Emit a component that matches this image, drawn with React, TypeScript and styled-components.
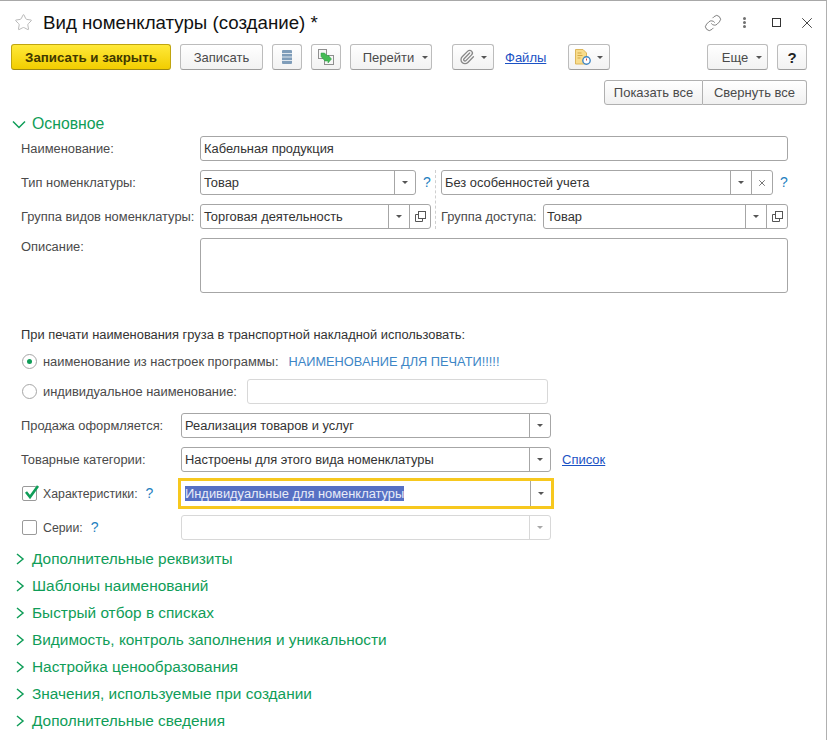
import { FC, ReactNode } from 'react';
import styled, { createGlobalStyle } from 'styled-components';
import { Link, Paperclip, Star, X } from 'lucide-react';

const GlobalStyle = createGlobalStyle`
    html, body {
        margin: 0;
        padding: 0;
        background: #fff;
    }
    body {
        font-family: "Liberation Sans", Arial, sans-serif;
        font-size: 12.88px;
        color: #4a4a4a;
    }
`;

const Window = styled.div`
    width: 826px;
    height: 739px;
    overflow: hidden;
    background: #fff;
    border-top: 1px solid #a8a8a8;
    border-right: 1px solid #b0b0b0;
`;

const TitleBar = styled.div`
    height: 43px;
    display: flex;
    align-items: center;
    padding: 0 10px 0 14px;
`;

const Title = styled.h1`
    margin: 0 0 0 10px;
    font-size: 18.7px;
    font-weight: 400;
    color: #111;
    flex: 1;
`;

const WinSlot = styled.span<{ $ml?: number }>`
    display: flex;
    margin-left: ${p => p.$ml ?? 0}px;
`;

const Kebab = styled.span`
    display: flex;
    flex-direction: column;
    gap: 1px;
    width: 12px;
    margin-left: 16px;
    align-items: center;
    i {
        display: block;
        width: 3px;
        height: 3px;
        border-radius: 50%;
        background: #707070;
    }
`;

const MaxBox = styled.span`
    width: 9px;
    height: 9px;
    margin-left: 22px;
    border: 1px solid #333;
    box-sizing: border-box;
`;

const Toolbar = styled.div`
    height: 26px;
    display: flex;
    align-items: center;
    padding: 0 19px 0 11px;
`;

const Button = styled.button<{ $w: number; $ml?: number; $primary?: boolean; $caret?: boolean }>`
    width: ${p => p.$w}px;
    height: 26px;
    margin-left: ${p => p.$ml ?? 9}px;
    padding: 0 0 0 ${p => (p.$caret ? 9 : 0)}px;
    display: flex;
    align-items: center;
    justify-content: center;
    gap: ${p => (p.$caret ? 8 : 6)}px;
    box-sizing: border-box;
    font: ${p => (p.$primary ? '700 13.3px' : '400 13px')} "Liberation Sans", Arial, sans-serif;
    color: ${p => (p.$primary ? '#403800' : '#4a4a4a')};
    background: ${p => (p.$primary ? 'linear-gradient(#ffe93a, #f2cd00)' : 'linear-gradient(#fff, #f2f2f2)')};
    border: 1px solid ${p => (p.$primary ? '#c0a510' : '#bcbcbc')};
    border-bottom-color: ${p => (p.$primary ? '#a08a10' : '#9e9e9e')};
    border-radius: 3px;
`;

const HelpMark = styled.span`
    font-size: 15px;
    font-weight: 700;
    color: #222;
`;

const Caret = styled.span<{ $light?: boolean }>`
    display: inline-block;
    width: 0;
    height: 0;
    border-left: 3.5px solid transparent;
    border-right: 3.5px solid transparent;
    border-top: 3.5px solid ${p => (p.$light ? '#a8a8a8' : '#555')};
`;

const LinkText = styled.a<{ $ml?: number }>`
    margin-left: ${p => p.$ml ?? 0}px;
    color: #1b52c4;
    text-decoration: underline;
    font-size: 13px;
`;

const Spacer = styled.div`
    flex: 1;
`;

const ExpandRow = styled.div`
    display: flex;
    justify-content: flex-end;
    padding-right: 19px;
    margin-top: 10px;
`;

const Segment = styled.button<{ $w: number; $last?: boolean }>`
    width: ${p => p.$w}px;
    height: 25px;
    padding: 0;
    box-sizing: border-box;
    font: 13px "Liberation Sans", Arial, sans-serif;
    color: #4a4a4a;
    background: linear-gradient(#fff, #f0f0f0);
    border: 1px solid #b0b0b0;
    border-left-width: ${p => (p.$last ? 0 : 1)}px;
    border-radius: ${p => (p.$last ? '0 3px 3px 0' : '3px 0 0 3px')};
`;

const SectionHead = styled.div<{ $h?: number; $mt?: number; $fs?: number }>`
    height: ${p => p.$h ?? 27}px;
    margin-top: ${p => p.$mt ?? 0}px;
    display: flex;
    align-items: center;
    gap: 6px;
    padding-left: 12px;
    font-size: ${p => p.$fs ?? 15.4}px;
    color: #0f9d58;
`;

const Form = styled.div`
    padding-left: 21px;
    display: flex;
    flex-direction: column;
`;

const Row = styled.div<{ $mt?: number; $h?: number }>`
    height: ${p => p.$h ?? 25}px;
    margin-top: ${p => p.$mt ?? 9}px;
    display: flex;
    align-items: center;
`;

const Label = styled.label<{ $w?: number; $top?: boolean }>`
    width: ${p => (p.$w ? `${p.$w}px` : 'auto')};
    flex: none;
    white-space: nowrap;
    align-self: ${p => (p.$top ? 'flex-start' : 'center')};
    padding-top: ${p => (p.$top ? '1px' : 0)};
`;

const Field = styled.div<{ $w: number; $h?: number; $pale?: boolean; $focus?: boolean; $ml?: number }>`
    width: ${p => p.$w}px;
    height: ${p => p.$h ?? 25}px;
    margin-left: ${p => p.$ml ?? 0}px;
    flex: none;
    box-sizing: border-box;
    display: flex;
    background: #fff;
    color: #333;
    border: ${p => (p.$focus ? 'none' : `1px solid ${p.$pale ? '#d8d8d8' : '#a6a6a6'}`)};
    border-radius: ${p => (p.$focus ? 0 : 3)}px;
    outline: ${p => (p.$focus ? '3px solid #f7c81e' : 'none')};
`;

const Value = styled.div<{ $focus?: boolean }>`
    flex: 1;
    min-width: 0;
    padding: ${p => (p.$focus ? '5px 4px' : '4px 3px')};
    line-height: 15px;
    white-space: nowrap;
`;

const Selected = styled.span`
    background: #5670c4;
    color: #e9ecf8;
`;

const FieldBtn = styled.div<{ $w?: number; $pale?: boolean }>`
    width: ${p => p.$w ?? 21}px;
    flex: none;
    box-sizing: border-box;
    display: flex;
    align-items: center;
    justify-content: center;
    border-left: 1px solid ${p => (p.$pale ? '#d8d8d8' : '#a6a6a6')};
    color: #666;
`;

const Hint = styled.span<{ $ml?: number }>`
    margin-left: ${p => p.$ml ?? 7}px;
    color: #1f7fc0;
    font-size: 14px;
    line-height: 15px;
`;

const Columns = styled.div`
    margin-top: 9px;
    display: flex;
`;

const LeftCol = styled.div`
    width: 415px;
    box-sizing: border-box;
    border-right: 1px dashed #cfcfcf;
    display: flex;
    flex-direction: column;
`;

const RightCol = styled.div`
    padding-left: 5px;
    display: flex;
    flex-direction: column;
`;

const Note = styled.div`
    height: 25px;
    margin-top: 29px;
    display: flex;
    align-items: center;
    color: #333;
`;

const RadioRow = styled.div<{ $mt?: number }>`
    height: 25px;
    margin-top: ${p => p.$mt ?? 2}px;
    display: flex;
    align-items: center;
    padding-left: 1px;
    gap: 6px;
`;

const Radio = styled.span<{ $on?: boolean }>`
    width: 15px;
    height: 15px;
    flex: none;
    box-sizing: border-box;
    border-radius: 50%;
    border: 1px solid #a6a6a6;
    display: flex;
    align-items: center;
    justify-content: center;
    &::after {
        content: '';
        width: 5px;
        height: 5px;
        border-radius: 50%;
        background: ${p => (p.$on ? '#0f9d58' : 'transparent')};
    }
`;

const BlueText = styled.span`
    margin-left: 4px;
    color: #3d86c6;
    font-size: 12.8px;
`;

const CheckCol = styled.div`
    width: 160px;
    flex: none;
    display: flex;
    align-items: center;
    padding-left: 1px;
    box-sizing: border-box;
    font-size: 12.3px;
`;

const CheckBox = styled.span`
    position: relative;
    width: 15px;
    height: 15px;
    margin-right: 6px;
    flex: none;
    box-sizing: border-box;
    border: 1px solid #9a9a9a;
    border-radius: 2px;
    svg {
        position: absolute;
        left: 0;
        top: -3px;
    }
`;

const ListIcon = () => (
    <svg width="10" height="14" viewBox="0 0 10 14">
        <rect x="0" y="0" width="10" height="14" rx="1" fill="#7f9db9" />
        <path d="M0 3.5h10M0 7h10M0 10.5h10" stroke="#dfe7ee" strokeWidth="1" />
    </svg>
);

const CopyIcon = () => (
    <svg width="16" height="16" viewBox="0 0 16 16">
        <rect x="0.5" y="0.5" width="8" height="9" fill="#f6f6f6" stroke="#8f8f8f" />
        <rect x="6.5" y="6.5" width="9" height="9" fill="#f6f6f6" stroke="#8f8f8f" />
        <path d="M3 4h3.5L10 7.5V6l3.5 4L10 14v-2H7L3 7.5z" fill="#45bb55" stroke="#2b9a42" strokeWidth="0.5" />
    </svg>
);

const ReportIcon = () => (
    <svg width="16" height="16" viewBox="0 0 16 16">
        <path d="M0.5 0.5h7.5l3.5 3.5v11h-11z" fill="#f8dc8c" stroke="#dcb65a" />
        <path d="M2.5 4h4M2.5 6.5h5M2.5 9h3" stroke="#d3a845" strokeWidth="1" />
        <circle cx="11.5" cy="11.5" r="3.7" fill="#fff" stroke="#3f86c4" strokeWidth="1.4" />
        <path d="M11.5 9.5v2" stroke="#d04040" strokeWidth="1" />
    </svg>
);

const OpenIcon = () => (
    <svg width="11" height="11" viewBox="0 0 11 11" fill="none" stroke="#555">
        <rect x="3.5" y="0.5" width="7" height="7" />
        <path d="M3.5 3.5h-3v7h7v-3" />
    </svg>
);

const CheckMark = () => (
    <svg width="18" height="17" viewBox="0 0 18 17">
        <path d="M3 8l4 5 8-11" fill="none" stroke="#0f9d58" strokeWidth="2.6" />
    </svg>
);

const Chevron: FC<{ open?: boolean }> = ({ open }) => (
    <svg width="14" height="14" viewBox="0 0 14 14" fill="none" stroke="#0f9d58" strokeWidth="1.5">
        <path d={open ? 'M1 4.5l6 6 6-6' : 'M5 2l6 5-6 5'} />
    </svg>
);

const Drop: FC<{ pale?: boolean }> = ({ pale }) => (
    <FieldBtn $pale={pale}>
        <Caret $light={pale} />
    </FieldBtn>
);

const Closed: FC<{ children: ReactNode; mt?: number }> = ({ children, mt }) => (
    <SectionHead $mt={mt}>
        <Chevron />
        {children}
    </SectionHead>
);

const App: FC = () => {
    return (
        <Window>
            <GlobalStyle />
            <TitleBar>
                <Star size={19} strokeWidth={1.2} color="#b5b5b5" />
                <Title>Вид номенклатуры (создание) *</Title>
                <WinSlot>
                    <Link size={18} strokeWidth={1.1} color="#666" />
                </WinSlot>
                <Kebab>
                    <i />
                    <i />
                    <i />
                </Kebab>
                <MaxBox />
                <WinSlot $ml={17}>
                    <X size={18} strokeWidth={1.3} color="#444" />
                </WinSlot>
            </TitleBar>

            <Toolbar>
                <Button $primary $w={160} $ml={0}>Записать и закрыть</Button>
                <Button $w={83}>Записать</Button>
                <Button $w={30}><ListIcon /></Button>
                <Button $w={30}><CopyIcon /></Button>
                <Button $w={82} $caret>Перейти <Caret /></Button>
                <Button $w={42} $ml={20}>
                    <Paperclip size={16} strokeWidth={2} color="#888" />
                    <Caret />
                </Button>
                <LinkText $ml={11}>Файлы</LinkText>
                <Button $w={42} $ml={22}><ReportIcon /><Caret /></Button>
                <Spacer />
                <Button $w={61} $caret>Еще <Caret /></Button>
                <Button $w={30}><HelpMark>?</HelpMark></Button>
            </Toolbar>

            <ExpandRow>
                <Segment $w={99}>Показать все</Segment>
                <Segment $w={104} $last>Свернуть все</Segment>
            </ExpandRow>

            <SectionHead $h={25} $mt={6} $fs={15.8}>
                <Chevron open />
                Основное
            </SectionHead>

            <Form>
                <Row $mt={0}>
                    <Label $w={179}>Наименование:</Label>
                    <Field $w={588}><Value>Кабельная продукция</Value></Field>
                </Row>

                <Columns>
                    <LeftCol>
                        <Row $mt={0}>
                            <Label $w={179}>Тип номенклатуры:</Label>
                            <Field $w={216}>
                                <Value>Товар</Value>
                                <Drop />
                            </Field>
                            <Hint>?</Hint>
                        </Row>
                        <Row>
                            <Label $w={179}>Группа видов номенклатуры:</Label>
                            <Field $w={231}>
                                <Value>Торговая деятельность</Value>
                                <Drop />
                                <FieldBtn><OpenIcon /></FieldBtn>
                            </Field>
                        </Row>
                    </LeftCol>
                    <RightCol>
                        <Row $mt={0}>
                            <Field $w={332}>
                                <Value>Без особенностей учета</Value>
                                <Drop />
                                <FieldBtn><X size={10} strokeWidth={2.4} color="#777" /></FieldBtn>
                            </Field>
                            <Hint $ml={7}>?</Hint>
                        </Row>
                        <Row>
                            <Label $w={102}>Группа доступа:</Label>
                            <Field $w={245}>
                                <Value>Товар</Value>
                                <Drop />
                                <FieldBtn><OpenIcon /></FieldBtn>
                            </Field>
                        </Row>
                    </RightCol>
                </Columns>

                <Row $h={55}>
                    <Label $w={179} $top>Описание:</Label>
                    <Field $w={588} $h={55} />
                </Row>

                <Note>При печати наименования груза в транспортной накладной использовать:</Note>

                <RadioRow>
                    <Radio $on />
                    наименование из настроек программы:
                    <BlueText>НАИМЕНОВАНИЕ ДЛЯ ПЕЧАТИ!!!!!</BlueText>
                </RadioRow>
                <RadioRow $mt={5}>
                    <Radio />
                    индивидуальное наименование:
                    <Field $w={301} $pale $ml={4} />
                </RadioRow>

                <Row>
                    <Label $w={160}>Продажа оформляется:</Label>
                    <Field $w={370}>
                        <Value>Реализация товаров и услуг</Value>
                        <Drop />
                    </Field>
                </Row>
                <Row>
                    <Label $w={160}>Товарные категории:</Label>
                    <Field $w={370}>
                        <Value>Настроены для этого вида номенклатуры</Value>
                        <Drop />
                    </Field>
                    <LinkText $ml={11}>Список</LinkText>
                </Row>
                <Row>
                    <CheckCol>
                        <CheckBox><CheckMark /></CheckBox>
                        Характеристики:
                        <Hint $ml={8}>?</Hint>
                    </CheckCol>
                    <Field $w={370} $focus>
                        <Value $focus><Selected>Индивидуальные для номенклатуры</Selected></Value>
                        <Drop />
                    </Field>
                </Row>
                <Row>
                    <CheckCol>
                        <CheckBox />
                        Серии:
                        <Hint $ml={8}>?</Hint>
                    </CheckCol>
                    <Field $w={370} $pale>
                        <Value />
                        <Drop pale />
                    </Field>
                </Row>
            </Form>

            <Closed mt={5}>Дополнительные реквизиты</Closed>
            <Closed>Шаблоны наименований</Closed>
            <Closed>Быстрый отбор в списках</Closed>
            <Closed>Видимость, контроль заполнения и уникальности</Closed>
            <Closed>Настройка ценообразования</Closed>
            <Closed>Значения, используемые при создании</Closed>
            <Closed>Дополнительные сведения</Closed>
        </Window>
    );
};

export default App;
